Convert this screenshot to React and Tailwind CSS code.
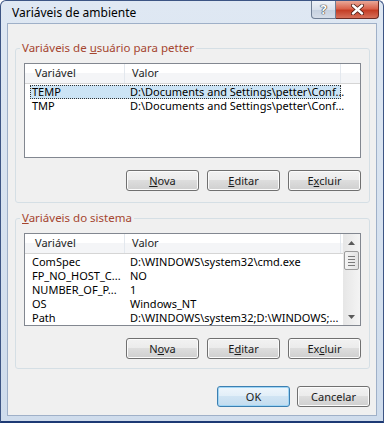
import React from 'react';

const userVars = [
  ['TEMP', 'D:\\Documents and Settings\\petter\\Conf...'],
  ['TMP', 'D:\\Documents and Settings\\petter\\Conf...'],
];

const systemVars = [
  ['ComSpec', 'D:\\WINDOWS\\system32\\cmd.exe'],
  ['FP_NO_HOST_C...', 'NO'],
  ['NUMBER_OF_P...', '1'],
  ['OS', 'Windows_NT'],
  ['Path', 'D:\\WINDOWS\\system32;D:\\WINDOWS;...'],
];

const Btn = ({ children, def }) => (
  <button
    className={
      def
        ? 'h-[21px] w-[73px] rounded-[3px] border border-[#3c7fb1] bg-[linear-gradient(#eef6fc_0%,#e1eef8_49%,#d0e4f3_50%,#c3dcef_100%)] shadow-[inset_0_0_0_1px_#9fd5f5] text-[11px] leading-none text-[#1a1a1a]'
        : 'h-[21px] w-[73px] rounded-[3px] border border-[#707070] bg-[linear-gradient(#f2f2f2_0%,#ebebeb_49%,#dddddd_50%,#cfcfcf_100%)] shadow-[inset_0_0_0_1px_#fbfbfb] text-[11px] leading-none text-[#1a1a1a]'
    }
  >
    {children}
  </button>
);

const Arrow = ({ up }) => (
  <div className="h-[17px] flex items-center justify-center">
    <svg width="7" height="4" viewBox="0 0 7 4">
      {up ? <polygon points="0,4 3.5,0 7,4" fill="#5a5a5a" /> : <polygon points="0,0 7,0 3.5,4" fill="#5a5a5a" />}
    </svg>
  </div>
);

const ScrollBar = () => (
  <div className="w-[17px] shrink-0 flex flex-col bg-[linear-gradient(to_right,#e6e6e6,#f4f4f4)]">
    <Arrow up />
    <div className="mx-[1px] h-[19px] rounded-[2px] border border-[#9b9b9b] bg-[linear-gradient(to_right,#f4f4f4,#e2e2e2)] flex flex-col items-center justify-center gap-[2px]">
      <div className="w-[7px] h-px bg-[#7a7a7a]" />
      <div className="w-[7px] h-px bg-[#7a7a7a]" />
      <div className="w-[7px] h-px bg-[#7a7a7a]" />
      <div className="w-[7px] h-px bg-[#7a7a7a]" />
    </div>
    <div className="flex-1" />
    <Arrow />
  </div>
);

const ListView = ({ rows, height, scroll }) => (
  <div className={`${height} border border-[#828790] bg-white flex`}>
    <div className="flex-1 flex flex-col min-w-0">
      <div className="h-[20px] shrink-0 flex border-b border-[#d5d5d5] bg-[linear-gradient(#ffffff_0%,#ffffff_50%,#f4f5f7_50%,#f4f5f7_100%)] text-[11px] text-[#1e1e1e]">
        <div className="w-[100px] shrink-0 pl-[10px] border-r border-[#e3e8ee] flex items-center">Variável</div>
        <div className="w-[216px] shrink-0 pl-[7px] border-r border-[#e3e8ee] flex items-center">Valor</div>
        <div className="flex-1" />
      </div>
      <div className="pt-[1px] flex flex-col">
        {rows.map(([name, value], i) => (
          <div
            key={name}
            className={
              !scroll && i === 0
                ? 'ml-[5px] w-[311px] h-[14px] shrink-0 flex items-center text-[11px] leading-[14px] text-black bg-[#cce4f5] outline outline-1 outline-dotted outline-[#333] -outline-offset-1'
                : 'ml-[5px] w-[311px] h-[14px] shrink-0 flex items-center text-[11px] leading-[14px] text-black'
            }
          >
            <div className="w-[96px] shrink-0 pl-[2px] whitespace-nowrap">{name}</div>
            <div className="pl-[4px] whitespace-nowrap">{value}</div>
          </div>
        ))}
      </div>
    </div>
    {scroll && <ScrollBar />}
  </div>
);

const Group = ({ legend, rows, height, scroll, buttons, pb }) => (
  <fieldset className={`ml-[7px] w-[355px] rounded-[3px] border border-[#d5dfe5] px-[8px] pt-[7px] ${pb}`}>
    <legend className="-ml-[4px] px-[2px] h-[16px] leading-[16px] text-[11.5px] text-[#a5452f]">{legend}</legend>
    <ListView rows={rows} height={height} scroll={scroll} />
    <div className="mt-[12px] flex justify-end gap-[8px]">{buttons}</div>
  </fieldset>
);

export default function App() {
  return (
    <div className="w-[384px] h-[423px] flex flex-col font-['Noto_Sans',sans-serif] bg-[linear-gradient(to_bottom,#dfe8f3,#cfdcec)] border border-[#3d5584] border-b-2 border-b-[#1d3a74] rounded-t-[6px] overflow-hidden">
      <div className="h-[22px] flex items-start">
        <div className="pl-[11px] pt-[4px] text-[12px] leading-[16px] text-black">Variáveis de ambiente</div>
        <div className="ml-auto mr-[4px] flex">
          <div className="w-[25px] h-[18px] rounded-bl-[4px] border border-t-0 border-[#6f7e94] bg-[linear-gradient(#eef2f7_0%,#d9e1ec_50%,#c5d0df_51%,#d5dde8_100%)] flex items-center justify-center">
            <span className="text-[13px] font-bold leading-none text-white [text-shadow:0_0_1px_#333,0_0_1px_#333,0_0_1px_#333]">?</span>
          </div>
          <div className="w-[43px] h-[18px] rounded-br-[4px] border border-t-0 border-l-0 border-[#6b2a22] bg-[linear-gradient(#e9a898_0%,#d9634c_45%,#c43d25_55%,#d6705a_100%)] flex items-center justify-center">
            <svg width="13" height="11" viewBox="0 0 13 11">
              <path d="M2 1.5 L11 9.5 M11 1.5 L2 9.5" stroke="#4a1a12" strokeWidth="4" strokeLinecap="round" />
              <path d="M2 1.5 L11 9.5 M11 1.5 L2 9.5" stroke="#ffffff" strokeWidth="2.4" strokeLinecap="round" />
            </svg>
          </div>
        </div>
      </div>
      <div className="mx-[6px] flex-1 mb-[5px] bg-[#f0f0f0] border border-[#9fb0c8] flex flex-col">
        <div className="mt-[16px]">
          <Group
            legend={<>Variáveis de <span className="underline">u</span>suário para petter</>}
            rows={userVars}
            height="h-[95px]"
            pb="pb-[11px]"
            buttons={
              <>
                <Btn><span className="underline">N</span>ova</Btn>
                <Btn><span className="underline">E</span>ditar</Btn>
                <Btn>E<span className="underline">x</span>cluir</Btn>
              </>
            }
          />
        </div>
        <div className="mt-[7px]">
          <Group
            legend={<><span className="underline">V</span>ariáveis do sistema</>}
            rows={systemVars}
            height="h-[93px]"
            scroll
            pb="pb-[9px]"
            buttons={
              <>
                <Btn>N<span className="underline">o</span>va</Btn>
                <Btn>E<span className="underline">d</span>itar</Btn>
                <Btn>Ex<span className="underline">c</span>luir</Btn>
              </>
            }
          />
        </div>
        <div className="mt-[17px] w-[362px] flex justify-end gap-[7px]">
          <Btn def>OK</Btn>
          <Btn>Cancelar</Btn>
        </div>
      </div>
    </div>
  );
}
